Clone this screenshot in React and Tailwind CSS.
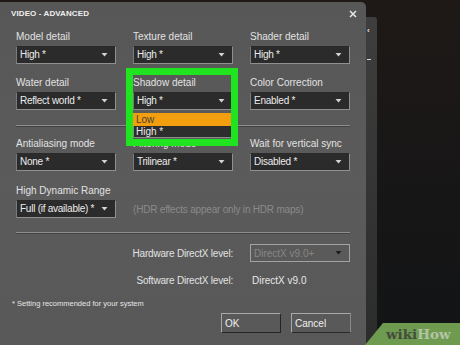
import React from "react";

function Arrow({ dark }) {
  return (
    <svg width="7" height="4" viewBox="0 0 7 4" className="shrink-0">
      <polygon points="0.5,0 6.5,0 3.5,3.5" fill={dark ? "#1c1c1c" : "#d2d2d2"} />
    </svg>
  );
}

function Select({ value, children }) {
  return (
    <div className="relative">
      <div className="h-[18px] flex items-center justify-between pl-[3px] pr-[7px] bg-[#2b2b2b] border border-[#909090] border-t-[#2a2a2a] border-l-[#7a7a7a] text-[10px] leading-[12px] text-[#ececec] tracking-[-0.25px]">
        <span>{value}</span>
        <Arrow />
      </div>
      {children}
    </div>
  );
}

function Field({ label, value, children }) {
  return (
    <div className="flex flex-col">
      <div className="h-[12px] text-[10px] leading-[12px] text-[#e2e2e2] whitespace-nowrap">{label}</div>
      <div className="mt-[3px]">
        <Select value={value}>{children}</Select>
      </div>
    </div>
  );
}

function Separator() {
  return <div className="mx-[16px] h-[2px] border-t border-t-[#8e8e8e] border-b border-b-[#424242]" />;
}

export default function App() {
  return (
    <div className="relative w-[460px] h-[345px] overflow-hidden flex bg-gradient-to-b from-[#1e1917] to-[#121416] font-['Liberation_Sans',Arial,sans-serif]">
      {/* dialog */}
      <div className="w-[366px] shrink-0 mt-[2px] h-[360px] bg-gradient-to-b from-[#575757] via-[#5b5b5b] to-[#585858] rounded-tr-[5px] flex flex-col">
        <div className="flex items-center justify-between pl-[11px] pr-[9px] pt-[7px] h-[17px]">
          <span className="text-[8px] leading-[10px] font-bold text-[#f0f0f0] tracking-[0.1px]">VIDEO - ADVANCED</span>
          <svg width="8" height="8" viewBox="0 0 8 8">
            <path d="M1 1 L7 7 M7 1 L1 7" stroke="#e8e8e8" strokeWidth="1.5" />
          </svg>
        </div>

        <div className="mt-[12px] px-[16px] grid grid-cols-3 gap-x-[17px] gap-y-[13px]">
          <Field label="Model detail" value="High *" />
          <Field label="Texture detail" value="High *" />
          <Field label="Shader detail" value="High *" />
          <Field label="Water detail" value="Reflect world *" />
          <Field label="Shadow detail" value="High *">
            <div className="absolute left-0 top-[21px] w-full z-10 flex flex-col">
              <div className="h-[13px] bg-[#f29e0e] pl-[3px] text-[10px] leading-[13px] text-[#4a4236]">Low</div>
              <div className="h-[12px] bg-[#2d2d2d] border border-[#8a8a8a] border-t-0 pl-[2px] text-[10px] leading-[11px] text-[#ececec]">High *</div>
            </div>
          </Field>
          <Field label="Color Correction" value="Enabled *" />
        </div>

        <div className="mt-[15px]">
          <Separator />
        </div>

        <div className="mt-[11px] px-[16px] grid grid-cols-3 gap-x-[17px] gap-y-[14px]">
          <Field label="Antialiasing mode" value="None *" />
          <Field label="Filtering mode" value="Trilinear *" />
          <Field label="Wait for vertical sync" value="Disabled *" />
          <Field label="High Dynamic Range" value="Full (if available) *" />
          <div className="col-span-2 flex items-end">
            <div className="h-[18px] flex items-center text-[10px] text-[#8a8a8a] whitespace-nowrap tracking-[-0.2px]">(HDR effects appear only in HDR maps)</div>
          </div>
        </div>

        <div className="mt-[14px]">
          <Separator />
        </div>

        <div className="mt-[10px] px-[16px] grid grid-cols-3 gap-x-[17px]">
          <div className="col-span-2 h-[18px] flex items-center justify-end text-[10px] text-[#e2e2e2] tracking-[-0.2px]">Hardware DirectX level:</div>
          <div className="h-[18px] flex items-center justify-between pl-[3px] pr-[7px] border border-[#a2a2a2] text-[10px] text-[#868686]">
            <span>DirectX v9.0+</span>
            <Arrow dark />
          </div>
        </div>
        <div className="mt-[9px] px-[16px] grid grid-cols-3 gap-x-[17px]">
          <div className="col-span-2 h-[18px] flex items-center justify-end text-[10px] text-[#e2e2e2] tracking-[-0.2px]">Software DirectX level:</div>
          <div className="h-[18px] flex items-center pl-[2px] text-[10px] text-[#e8e8e8]">DirectX v9.0</div>
        </div>

        <div className="mt-[10px] pl-[12px] h-[10px] text-[7.5px] leading-[10px] text-[#e6e6e6]">* Setting recommended for your system</div>

        <div className="mt-[4px] pr-[15px] flex justify-end gap-[10px]">
          <div className="w-[60px] h-[20px] flex items-center pl-[3px] bg-[#595959] border border-[#a8a8a8] border-r-[#242424] border-b-[#242424] text-[10px] text-[#f0f0f0]">OK</div>
          <div className="w-[60px] h-[20px] flex items-center pl-[3px] bg-[#595959] border border-[#a8a8a8] border-r-[#8a8a8a] border-b-[#2a2a2a] text-[10px] text-[#f0f0f0]">Cancel</div>
        </div>
      </div>

      {/* window behind */}
      <div className="w-[11px] shrink-0 mt-[17px] bg-gradient-to-b from-[#3e3e3e] to-[#2c2c2c] rounded-tr-[3px] flex flex-col items-start">
        <div className="mt-[10px] ml-[1px] text-[8px] leading-[8px] font-bold text-[#e6e6e6]">‹</div>
        <div className="mt-[24px] ml-[1px] w-[4px] h-[1px] bg-[#d8d8d8]" />
      </div>
      <div className="flex-1" />

      {/* green highlight annotation */}
      <div className="absolute left-[126px] top-[68px] w-[112px] h-[78px] border-[7px] border-[#1fe41f] pointer-events-none z-20" />

      {/* wikiHow badge */}
      <div className="absolute left-[364px] top-[323px] w-[96px] h-[22px]">
        <svg width="96" height="22" viewBox="0 0 96 22" className="absolute inset-0">
          <polygon points="19,0 96,0 96,22 1,22" fill="#6f9b51" />
        </svg>
        <div className="absolute left-[22px] top-[3px] text-[13.5px] leading-[16px] font-bold font-['DejaVu_Serif',serif]">
          <span className="text-[#434c3d]">wiki</span>
          <span className="text-[#b4c4a6]">How</span>
        </div>
      </div>
    </div>
  );
}
